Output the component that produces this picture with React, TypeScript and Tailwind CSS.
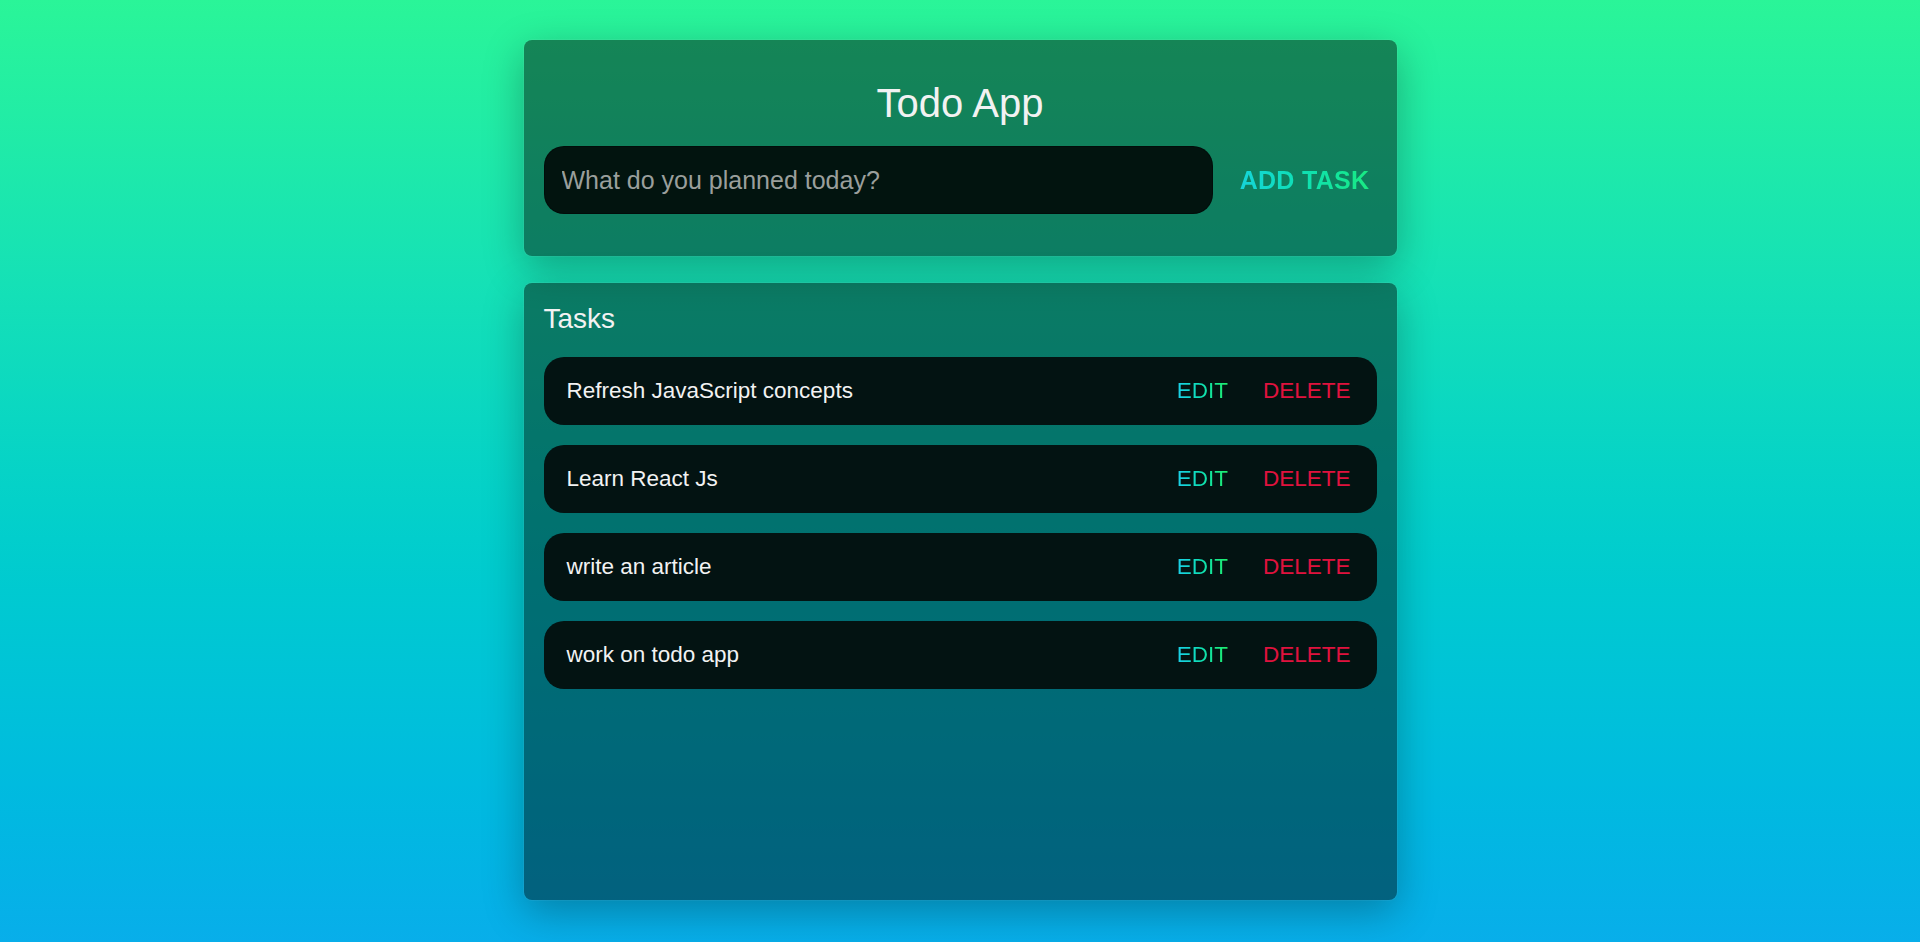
import React, { useState } from "react";

interface Task {
  id: number;
  text: string;
}

const initialTasks: Task[] = [
  { id: 1, text: "Refresh JavaScript concepts" },
  { id: 2, text: "Learn React Js" },
  { id: 3, text: "write an article" },
  { id: 4, text: "work on todo app" },
];

const gradientText =
  "bg-gradient-to-r from-[#1ccfe8] to-[#20ee68] bg-clip-text text-transparent";

const TaskRow: React.FC<{ task: Task; onDelete: (id: number) => void }> = ({
  task,
  onDelete,
}) => {
  return (
    <div className="h-[68px] bg-[#031312] rounded-[20px] flex items-center justify-between pl-[23px] pr-[26px]">
      <p className="text-[22.5px] text-[#f2f2f2]">{task.text}</p>
      <div className="flex items-center gap-[35px]">
        <button className={`text-[22.5px] font-medium ${gradientText}`}>
          EDIT
        </button>
        <button
          onClick={() => onDelete(task.id)}
          className="text-[22.5px] font-medium text-[#e0123e]"
        >
          DELETE
        </button>
      </div>
    </div>
  );
};

const App: React.FC = () => {
  const [tasks, setTasks] = useState<Task[]>(initialTasks);
  const [input, setInput] = useState("");

  const addTask = () => {
    if (!input.trim()) return;
    setTasks([...tasks, { id: Date.now(), text: input.trim() }]);
    setInput("");
  };

  return (
    <div
      className="min-h-screen w-full bg-gradient-to-b from-[#2af598] to-[#08aeea] pt-10 flex flex-col items-center"
      style={{ fontFamily: '"Liberation Sans", Arial, sans-serif' }}
    >
      <div className="w-[873px] bg-black/45 rounded-lg ring-1 ring-white/5 shadow-[0_12px_40px_rgba(0,0,0,0.28)] pt-[41px] pb-[42px] pl-5">
        <h1 className="text-center text-[40px] leading-[44px] text-[#f2f2f2] mb-[21px] pr-5">
          Todo App
        </h1>
        <div className="flex items-center">
          <input
            value={input}
            onChange={(e) => setInput(e.target.value)}
            placeholder="What do you planned today?"
            className="w-[669px] shrink-0 h-[68px] bg-[#02140f] rounded-[20px] px-[17px] text-[25px] text-[#f0f0f0] placeholder:text-[#9a9f9c] outline-none border border-black/30"
          />
          <button
            onClick={addTask}
            className={`w-[184px] shrink-0 pt-[2px] text-center text-[25px] font-bold tracking-[0.3px] ${gradientText}`}
          >
            ADD TASK
          </button>
        </div>
      </div>

      <div className="w-[873px] h-[617px] mt-[27px] bg-black/45 rounded-lg ring-1 ring-white/5 shadow-[0_12px_40px_rgba(0,0,0,0.28)] px-5 pt-5">
        <h2 className="text-[28px] leading-[32px] text-[#f2f2f2] mb-[22px]">
          Tasks
        </h2>
        <div className="flex flex-col gap-5">
          {tasks.map((task) => (
            <TaskRow
              key={task.id}
              task={task}
              onDelete={(id) => setTasks(tasks.filter((t) => t.id !== id))}
            />
          ))}
        </div>
      </div>
    </div>
  );
};

export default App;
